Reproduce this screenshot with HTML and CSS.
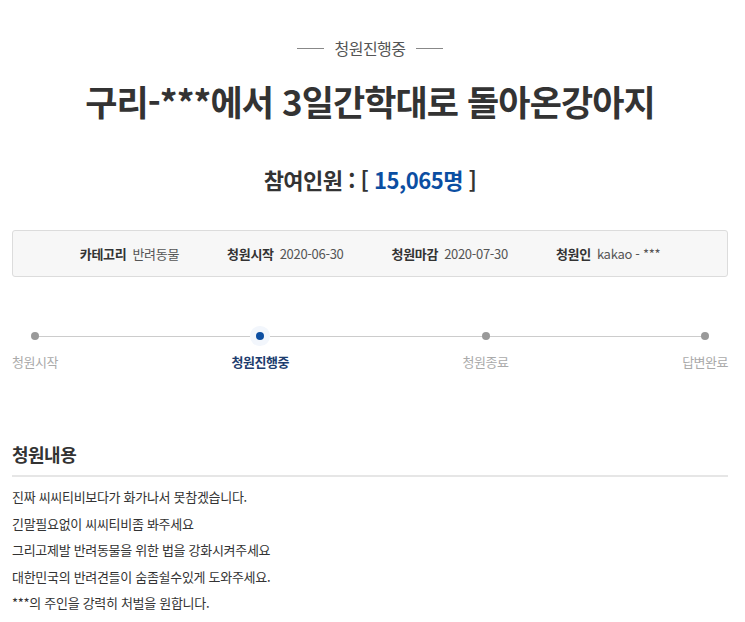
FILE: index.html
```html
<!DOCTYPE html>
<html lang="ko">
<head>
<meta charset="utf-8">
<link rel="stylesheet" href="styles.css">
</head>
<body>
<div class="page">
  <div class="status"><span class="dash"></span><span class="status-text">청원진행중</span><span class="dash"></span></div>
  <h1 class="title">구리-***에서 3일간학대로 돌아온강아지</h1>
  <div class="count">참여인원 : [ <span class="num">15,065명</span> ]</div>
  <div class="info">
    <div class="info-item"><b>카테고리</b><span>반려동물</span></div>
    <div class="info-item"><b>청원시작</b><span>2020-06-30</span></div>
    <div class="info-item"><b>청원마감</b><span>2020-07-30</span></div>
    <div class="info-item"><b>청원인</b><span>kakao - ***</span></div>
  </div>
  <div class="steps">
    <div class="line"></div>
    <div class="step"><span class="dot"></span><span class="label">청원시작</span></div>
    <div class="step active"><span class="dot"></span><span class="label">청원진행중</span></div>
    <div class="step"><span class="dot"></span><span class="label">청원종료</span></div>
    <div class="step"><span class="dot"></span><span class="label">답변완료</span></div>
  </div>
  <h2 class="section">청원내용</h2>
  <div class="content">
    <p>진짜 씨씨티비보다가 화가나서 못참겠습니다.</p>
    <p>긴말필요없이 씨씨티비좀 봐주세요</p>
    <p>그리고제발 반려동물을 위한 법을 강화시켜주세요</p>
    <p>대한민국의 반려견들이 숨좀쉴수있게 도와주세요.</p>
    <p>***의 주인을 강력히 처벌을 원합니다.</p>
  </div>
</div>
</body>
</html>
```
FILE: styles.css
```css
html, body { margin: 0; padding: 0; background: #fff; }
body {
  font-family: "Noto Sans CJK KR", "Noto Sans", sans-serif;
  color: #333;
}
.page { padding: 34px 17px 0 12px; }
.status {
  display: flex; align-items: center; justify-content: center;
  gap: 10px; height: 28px;
}
.dash { width: 27px; height: 1px; background: #888; }
.status-text { font-size: 16px; color: #555; letter-spacing: -0.5px; }
.title {
  margin: 17px 0 0; text-align: center;
  font-size: 35px; font-weight: 700; line-height: 44px;
  letter-spacing: -0.9px; color: #333;
}
.count {
  margin-top: 40px; text-align: center;
  font-size: 22px; font-weight: 700; line-height: 32px; letter-spacing: -0.5px;
  color: #333;
}
.count .num { color: #0b4ea2; }
.info {
  margin-top: 35px; height: 45px;
  background: #f7f7f7; border: 1px solid #dcdcdc; border-radius: 3px;
  display: flex; align-items: center; justify-content: center; gap: 48px;
  font-size: 13px; letter-spacing: -0.3px;
}
.info-item b { font-weight: 700; color: #333; margin-right: 6px; }
.info-item span { color: #555; }
.steps {
  position: relative; margin-top: 55px;
  display: flex; justify-content: space-between;
}
.line { position: absolute; left: 24px; right: 24px; top: 4px; height: 1px; background: #ccc; }
.step { position: relative; display: flex; flex-direction: column; align-items: center; }
.dot { width: 8px; height: 8px; border-radius: 50%; background: #999; }
.step.active .dot { background: #0b4ea2; box-shadow: 0 0 0 6px #f2f6fc; }
.label { margin-top: 12px; font-size: 13px; color: #aaa; line-height: 20px; letter-spacing: -0.5px; }
.step.active .label { font-weight: 700; color: #1d3d6e; }
.section {
  margin: 69px 0 0; padding-bottom: 8px;
  font-size: 18px; font-weight: 700; line-height: 26px; letter-spacing: -0.5px;
  border-bottom: 2px solid #e6e6e6;
}
.content { margin-top: 7px; font-size: 13px; color: #333; letter-spacing: -0.3px; }
.content p { margin: 0; line-height: 26.5px; }
```
